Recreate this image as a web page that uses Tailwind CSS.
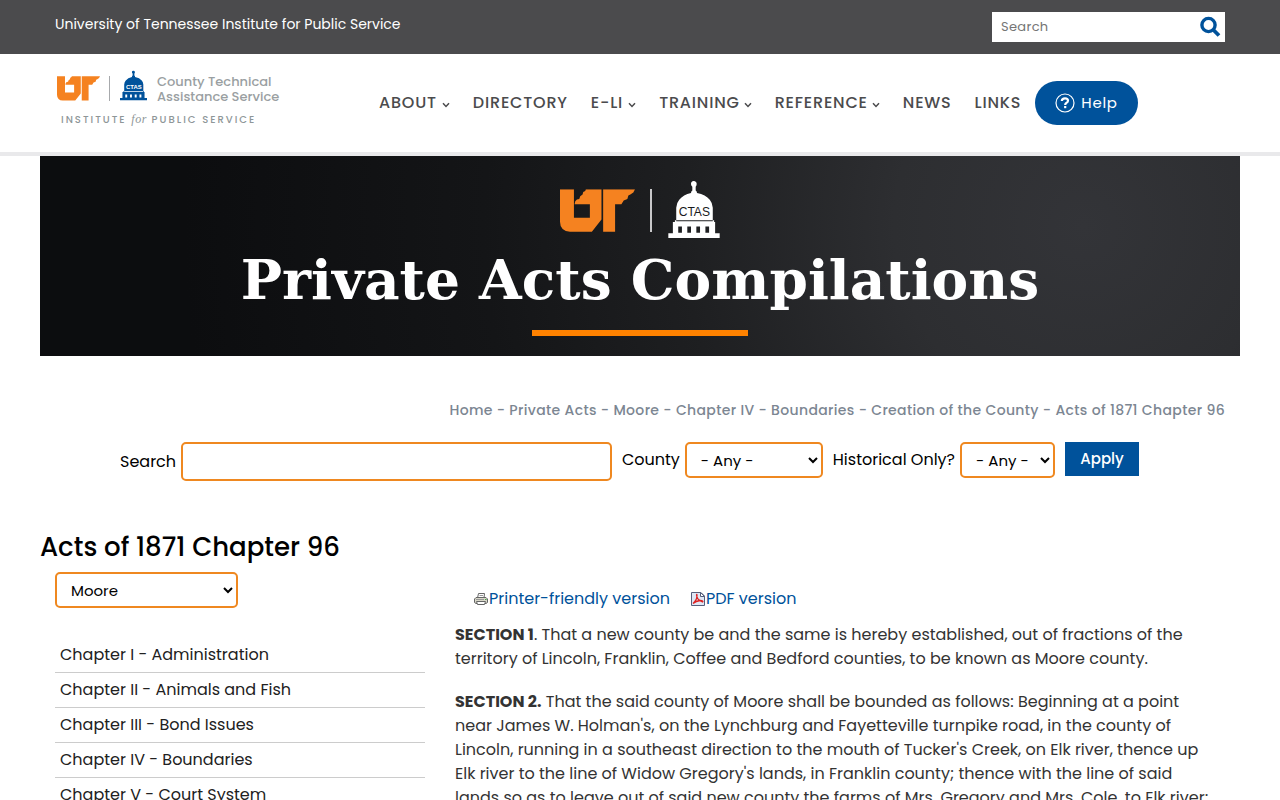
<!DOCTYPE html>
<html lang="en">
<head>
  <meta charset="UTF-8" />
  <meta name="viewport" content="width=device-width, initial-scale=1.0" />
  <title>Acts of 1871 Chapter 96 | CTAS</title>
  <script src="https://cdn.jsdelivr.net/npm/@tailwindcss/browser@4"></script>
</head>
<body class="bg-white text-black text-base font-['Poppins','Inter',sans-serif]">

  <!-- Shared logo shapes -->
  <svg class="hidden" aria-hidden="true">
    <symbol id="ut" viewBox="0 0 226 130">
      <path fill="#f58220" d="M0 0H42V86H90V45H44L46 36L51 31L58 29L61 21L68 16L70 8L76 5L78 0H125V91L96 128H30Q16 128 8 120Q0 112 0 98Z" />
      <path fill="#f58220" d="M130 0H226L221 10L212 16L206 19L203 29L192 34L185 45H166V128H130Z" />
    </symbol>
    <symbol id="dome" viewBox="0 0 154 170">
      <path fill="currentColor" fill-rule="evenodd" d="M76 0Q85 1 85 9Q85 14 82 17V28Q86 30 86 36Q112 41 124 56Q132 65 133 80V117H137V122H140V156H154V170H0V156H14V122H20V117H24V80Q25 65 33 56Q45 41 68 36Q68 30 72 28V17Q68 14 68 9Q68 1 76 0ZM24 117V120H133V117ZM30 136V154H41V136ZM57 136V154H68V136ZM84 136V154H95V136ZM111 136V154H122V136Z" />
    </symbol>
    <symbol id="caret" viewBox="0 0 8 6">
      <path d="M1 1.2L4 4.4L7 1.2" fill="none" stroke="currentColor" stroke-width="1.5" />
    </symbol>
  </svg>

  <div class="bg-[#4b4b4d]">
    <div class="max-w-[1200px] mx-auto px-[15px] h-[54px] flex items-start justify-between pt-3">
      <a href="#" class="text-sm leading-6 text-white">University of Tennessee Institute for Public Service</a>
      <form class="flex items-center bg-white h-[30px] w-[233px] pl-[9px] pr-1">
        <input type="search" aria-label="Search" placeholder="Search" class="flex-1 min-w-0 text-[13px] tracking-wide outline-none placeholder:text-[#757575]" />
        <button type="button" aria-label="Search" class="text-[#00529b]">
          <svg class="w-[22px] h-[22px]" viewBox="0 0 22 22" fill="none" stroke="currentColor">
            <circle cx="9.500" cy="9" r="6.600" stroke-width="3.400" />
            <path d="M14.500 14L20 19.500" stroke-width="3.800" />
          </svg>
        </button>
      </form>
    </div>
  </div>

  <header class="border-b-4 border-[#e9e9eb]">
    <div class="max-w-[1200px] mx-auto px-[15px] h-[98px] flex items-center">
      <a href="#" class="w-[324px] shrink-0 self-start pt-4 pl-[2px]">
        <div class="flex items-end">
          <svg class="w-[43px] h-[25px]" aria-hidden="true"><use href="#ut" /></svg>
          <span class="w-px h-[25px] bg-[#a7a9ac] ml-[9px] mr-[10px]"></span>
          <svg class="w-[27px] h-[31px] text-[#00529b]" viewBox="0 0 154 170" role="img" aria-label="CTAS">
            <use href="#dome" />
            <text x="79" y="104" text-anchor="middle" class="fill-white font-['Liberation_Sans'] font-bold text-[34px]">CTAS</text>
          </svg>
          <span class="ml-[10px] -mb-[3px] text-[13px] leading-[15px] font-medium text-[#9a9fa2]">County Technical<br />Assistance Service</span>
        </div>
        <div class="mt-[10px] ml-1 text-[10px] leading-4 font-medium tracking-[2px] text-[#8e9698]">INSTITUTE <i class="font-['Liberation_Serif'] text-[12px] tracking-wider">for</i> PUBLIC SERVICE</div>
      </a>
      <nav class="flex items-center gap-[23px] font-medium tracking-wider text-[#4b4b4d]">
        <a href="#" class="flex items-center gap-[5px]">ABOUT <svg class="w-2 h-[6px] mt-1"><use href="#caret" /></svg></a>
        <a href="#">DIRECTORY</a>
        <a href="#" class="flex items-center gap-[5px]">E-LI <svg class="w-2 h-[6px] mt-1"><use href="#caret" /></svg></a>
        <a href="#" class="flex items-center gap-1">TRAINING <svg class="w-2 h-[6px] mt-1"><use href="#caret" /></svg></a>
        <a href="#" class="flex items-center gap-1">REFERENCE <svg class="w-2 h-[6px] mt-1"><use href="#caret" /></svg></a>
        <a href="#">NEWS</a>
        <a href="#">LINKS</a>
      </nav>
      <a href="#" class="ml-[14px] h-11 px-5 flex items-center gap-[6px] rounded-full bg-[#00529b] text-white text-[15px] tracking-wider">
        <svg class="w-5 h-5" viewBox="0 0 20 20" fill="none" stroke="currentColor">
          <circle cx="10" cy="10" r="9" stroke-width="1.2" />
          <path d="M6.8 8Q7 5.4 10 5.4Q13 5.4 13 7.8Q13 9.2 11.3 10Q10.2 10.6 10.2 12" stroke-width="2.2" />
          <path d="M10.2 13V15.2" stroke-width="2.2" />
        </svg>
        Help
      </a>
    </div>
  </header>

  <section class="max-w-[1200px] mx-auto h-[200px] pt-[25px] flex flex-col items-center bg-[radial-gradient(circle_at_87%_35%,#333438_0px,#2d2e31_190px,#1e1f21_400px,#141517_600px,#0c0d0f_900px)]">
    <div class="flex items-end">
      <svg class="w-[75px] h-[57px]" aria-hidden="true" viewBox="0 0 226 170"><use href="#ut" y="24" width="226" height="130" /></svg>
      <span class="w-[2px] h-[43px] bg-[#c8c8ca] ml-[15px] mr-4 mb-[6px]"></span>
      <svg class="w-[52px] h-[57px] text-white" viewBox="0 0 154 170" role="img" aria-label="CTAS">
        <use href="#dome" />
        <text x="78" y="103" text-anchor="middle" class="fill-[#18191b] font-['Liberation_Sans'] text-[36px]">CTAS</text>
      </svg>
    </div>
    <h2 class="mt-2 text-[55px] leading-[68px] font-bold text-white whitespace-nowrap font-['DejaVu_Serif',serif]">Private Acts Compilations</h2>
    <div class="mt-4 w-[216px] h-[6px] bg-[#ff8200]"></div>
  </section>

  <main class="max-w-[1200px] mx-auto">
    <nav aria-label="Breadcrumb" class="mt-[42px] pr-[15px] text-right text-sm leading-6 font-medium tracking-wide text-[#7c8692]">
      <a href="#">Home</a> - <a href="#">Private Acts</a> - <a href="#">Moore</a> - <a href="#">Chapter IV - Boundaries</a> - <a href="#">Creation of the County</a> - Acts of 1871 Chapter 96
    </nav>

    <form class="mt-5 ml-20 mr-[101px] flex items-start gap-[10px]">
      <div class="flex flex-1 items-center gap-[5px]">
        <label for="keys">Search</label>
        <input id="keys" type="text" class="flex-1 min-w-0 h-[39px] px-3 border-2 border-[#ef8820] rounded-[5px]" />
      </div>
      <div class="flex items-center gap-[5px]">
        <label for="county">County</label>
        <select id="county" class="w-[138px] h-9 pl-[10px] text-[15px] border-2 border-[#ef8820] rounded-[5px] bg-white">
          <option>- Any -</option>
          <option>Moore</option>
        </select>
      </div>
      <div class="flex items-center gap-[5px]">
        <label for="historical">Historical Only?</label>
        <select id="historical" class="w-[95px] h-9 pl-[10px] text-[15px] border-2 border-[#ef8820] rounded-[5px] bg-white">
          <option>- Any -</option>
          <option>Yes</option>
          <option>No</option>
        </select>
      </div>
      <button type="button" class="w-[74px] h-[34px] bg-[#00529b] text-white text-[15px] font-medium">Apply</button>
    </form>

    <h1 class="mt-12 text-[26px] leading-9 font-medium">Acts of 1871 Chapter 96</h1>

    <div class="mt-[7px] px-[15px] flex gap-[30px]">
      <aside class="w-[370px] shrink-0">
        <select aria-label="Choose a county" class="w-[183px] h-9 pl-[10px] text-[15px] border-2 border-[#ef8820] rounded-[5px] bg-white">
          <option>Moore</option>
        </select>
        <ul class="mt-[30px] leading-6 text-[#212121]">
          <li class="border-b border-[#ccc]"><a href="#" class="block p-[5px]">Chapter I - Administration</a></li>
          <li class="border-b border-[#ccc]"><a href="#" class="block p-[5px]">Chapter II - Animals and Fish</a></li>
          <li class="border-b border-[#ccc]"><a href="#" class="block p-[5px]">Chapter III - Bond Issues</a></li>
          <li class="border-b border-[#ccc]"><a href="#" class="block p-[5px]">Chapter IV - Boundaries</a></li>
          <li class="border-b border-[#ccc]"><a href="#" class="block p-[5px]">Chapter V - Court System</a></li>
        </ul>
      </aside>

      <article class="flex-1 min-w-0 pt-[15px] pr-2 leading-6 text-[#333]">
        <div class="flex gap-5 pl-[18px] text-[#00529b]">
          <a href="#" class="flex items-center">
            <svg class="w-4 h-4" viewBox="0 0 16 16" stroke="#666" stroke-width="1">
              <path d="M4.500 7L5.500 2.500H11.500L11 7" fill="#fff" />
              <path d="M3 6.500H13L14.500 8V11.500L13 12.500H3L1.500 11.500V8Z" fill="#d8d7c8" />
              <path d="M3.500 10.500H12.500L11.500 13.500H4.500Z" fill="#fff" />
              <path d="M6.500 4.500H10M3 8.500H11" stroke="#999" />
              <path d="M12 8.500H13.500" stroke="#4a4" />
            </svg>Printer-friendly version</a>
          <a href="#" class="flex items-center">
            <svg class="w-4 h-4" viewBox="0 0 16 16">
              <path d="M1.500 1.500H11L14.500 5V14.500H1.500Z" fill="#dfe7f5" stroke="#555f7c" />
              <path d="M10.500 1.500V5.500H14.500Z" fill="#fff" stroke="#555f7c" />
              <path d="M3 12.500Q7 9 7 4.500Q7 2.500 6.500 4Q7 9 12.500 11Q14 10 10 9.500Q6 10 3 12.500" fill="none" stroke="#d22" stroke-width="1.300" />
            </svg>PDF version</a>
        </div>
        <p class="mt-3"><strong>SECTION 1</strong>. That a new county be and the same is hereby established, out of fractions of the territory of Lincoln, Franklin, Coffee and Bedford counties, to be known as Moore county.</p>
        <p class="mt-[19px]"><strong>SECTION 2.</strong> That the said county of Moore shall be bounded as follows: Beginning at a point near James W. Holman's, on the Lynchburg and Fayetteville turnpike road, in the county of Lincoln, running in a southeast direction to the mouth of Tucker's Creek, on Elk river, thence up Elk river to the line of Widow Gregory's lands, in Franklin county; thence with the line of said lands so as to leave out of said new county the farms of Mrs. Gregory and Mrs. Cole, to Elk river;</p>
      </article>
    </div>
  </main>
</body>
</html>
